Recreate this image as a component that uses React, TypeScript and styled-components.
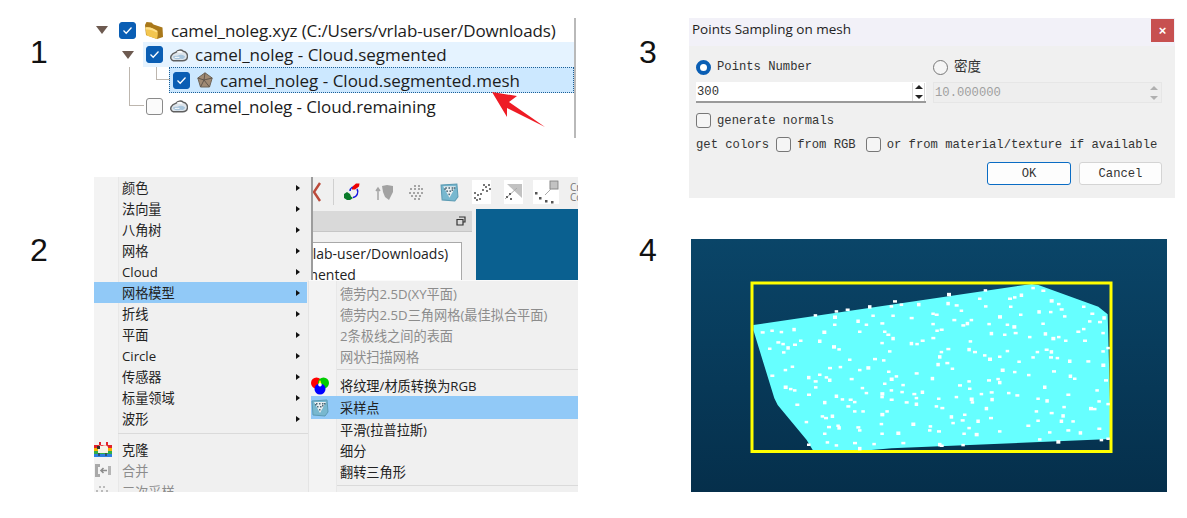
import React from "react";
import styled, { createGlobalStyle } from "styled-components";

const GlobalStyle = createGlobalStyle`
  html, body { margin: 0; padding: 0; background: #fff; }
  body { width: 1187px; height: 518px; overflow: hidden; font-family: "Open Sans", "Noto Sans CJK SC", sans-serif; }
`;

const Page = styled.div`
  display: flex;
  width: 1187px;
  height: 518px;
`;

const Column = styled.div<{ $w: number; $gap: number }>`
  width: ${(p) => p.$w}px;
  display: flex;
  flex-direction: column;
  gap: ${(p) => p.$gap}px;
  padding-top: 18px;
  box-sizing: border-box;
`;

const Figure = styled.section<{ $pad: number }>`
  display: flex;
  padding-left: ${(p) => p.$pad}px;
`;

const Num = styled.div<{ $top: number; $w: number }>`
  width: ${(p) => p.$w}px;
  flex: none;
  margin-top: ${(p) => p.$top}px;
  font: 32px/36px "Liberation Sans", sans-serif;
  color: #111;
`;

/* ---- 1: tree ---- */
const Tree = styled.div`
  position: relative;
  width: 481px;
  height: 120px;
  border-right: 2px solid #b9b9b9;
  font-size: 17px;
  color: #1c1c1c;
`;

const Row = styled.div<{ $indent: number; $h: number }>`
  display: flex;
  height: ${(p) => p.$h}px;
  margin-left: ${(p) => p.$indent}px;
`;

const ArrowSlot = styled.div<{ $w: number }>`
  width: ${(p) => p.$w}px;
  flex: none;
  display: flex;
  align-items: center;
`;

const Arrow = styled.span`
  width: 0;
  height: 0;
  border-left: 6px solid transparent;
  border-right: 6px solid transparent;
  border-top: 8px solid #6d5a50;
`;

const RowBody = styled.div<{ $pad: number; $state?: "hover" | "current" }>`
  position: relative;
  flex: 1;
  display: flex;
  align-items: center;
  gap: 7px;
  padding-left: ${(p) => p.$pad}px;
  box-sizing: border-box;
  background: ${(p) => (p.$state === "hover" ? "#e5f3ff" : p.$state === "current" ? "#cce8ff" : "transparent")};
  ${(p) => p.$state === "current" && "outline: 1px dotted #1c5f96; outline-offset: -1px;"}
`;

const TreeCheck = styled.span<{ $on?: boolean }>`
  width: 17px;
  height: 17px;
  flex: none;
  box-sizing: border-box;
  border-radius: 3px;
  display: flex;
  align-items: center;
  justify-content: center;
  background: ${(p) => (p.$on ? "#0a5eb4" : "#fbfbfb")};
  border: 1px solid ${(p) => (p.$on ? "#0a5eb4" : "#8a8a8a")};
`;

const IconSlot = styled.span<{ $w: number }>`
  width: ${(p) => p.$w}px;
  flex: none;
  display: flex;
  align-items: center;
  justify-content: center;
`;

const Name = styled.span<{ $ls: number }>`
  white-space: nowrap;
  letter-spacing: ${(p) => p.$ls}px;
`;

const Connector = styled.span<{ $left: number; $top: number; $w: number; $h: number }>`
  position: absolute;
  left: ${(p) => p.$left}px;
  top: ${(p) => p.$top}px;
  width: ${(p) => p.$w}px;
  height: ${(p) => p.$h}px;
  border-left: 1px solid #bdb6ae;
  border-bottom: 1px solid #bdb6ae;
`;

const PointerArrow = styled.svg`
  position: absolute;
  left: 398px;
  top: 73px;
`;

const Tick = () => (
  <svg width="11" height="9" viewBox="0 0 11 9">
    <path d="M1.5 4.5 4.2 7.2 9.5 1.5" fill="none" stroke="#fff" strokeWidth="1.3" />
  </svg>
);

const CloudIcon = () => (
  <svg width="19" height="14" viewBox="0 0 19 14">
    <path d="M3.500 13C1 12.500 0 9.500 1.500 7.500 2.500 5 5 4.500 6.500 4 8 1.500 12 1 14 3c3 .5 5 3.500 4.300 6.500-.5 2.500-2.500 3.500-5 3.500z" fill="#dfe6ec" stroke="#5f5f5f" strokeWidth="1.500" />
    <path d="M7 3.500c2-1 5-1 6.500.5-2 1-4.500.5-6.500-.5z" fill="#fff" />
    <path d="M3 9c2-2 3.500-.5 5.500-1.500S12.500 6.500 16 8.500c-1 2.500-3 3-5 2.500-2.500 1-5.500 1-8-2z" fill="#a9c6dd" />
    <path d="M5 9.500c2-.5 3 .5 5 0" fill="none" stroke="#fff" strokeWidth="1" />
  </svg>
);

const FolderIcon = () => (
  <svg width="20" height="19" viewBox="0 0 20 19">
    <path d="M1 4 2.500 1 7.500 1.500 9.500 3.500 18.500 6.500 19 16 13 18 2 14z" fill="#a9781a" />
    <path d="M1.500 6.500C5 5.500 9 7 13.500 10c.5 2.500.3 5 -.5 8L2.500 14.500z" fill="#f3c650" />
    <path d="M1.500 6.500C5 5.500 9 7 13.500 10l-1 1.500C9 9 5 8 1.500 8.500z" fill="#ffe08a" />
  </svg>
);

const MeshIcon = () => (
  <svg width="16" height="16" viewBox="0 0 16 16">
    <path d="M8 .8 15.200 6 12.500 15H3.500L.8 6z" fill="#a08a74" stroke="#6d6458" strokeWidth="1" />
    <path d="M8 .8 7 8M.8 6 7 8M15.200 6 7 8M3.500 15 7 8M12.500 15 7 8" stroke="#5b5148" strokeWidth=".9" fill="none" />
  </svg>
);

/* ---- 2: context menu ---- */
const AppShot = styled.div`
  position: relative;
  width: 484px;
  height: 315px;
  overflow: hidden;
  background: #f0f0f0;
  display: flex;
  flex-direction: column;
`;

const Toolbar = styled.div`
  height: 32px;
  flex: none;
  padding: 0 0 2px 219px;
  display: flex;
  align-items: center;
  box-sizing: border-box;
`;

const ToolIcon = styled.span<{ $w: number; $ml: number; $bg?: string }>`
  width: ${(p) => p.$w}px;
  height: 24px;
  flex: none;
  margin-left: ${(p) => p.$ml}px;
  display: flex;
  align-items: center;
  justify-content: center;
  background: ${(p) => p.$bg || "transparent"};
`;

const ToolDivider = styled.span`
  width: 1px;
  height: 26px;
  flex: none;
  margin-left: 12px;
  background: #d0d0d0;
`;

const ToolText = styled.span`
  margin-left: 11px;
  width: 8px;
  overflow: hidden;
  font-size: 10px;
  line-height: 10px;
  color: #777;
`;

const Workspace = styled.div`
  flex: 1;
  display: flex;
  padding-left: 219px;
`;

const DockPane = styled.div`
  width: 159px;
  flex: none;
  margin-top: 2px;
`;

const DockHeader = styled.div`
  height: 20px;
  background: #d9d9d9;
  border-bottom: 1px solid #c6c6c6;
  display: flex;
  align-items: center;
  justify-content: flex-end;
  padding-right: 6px;
  color: #333;
`;

const DockTree = styled.div`
  width: 149px;
  height: 60px;
  margin-top: 10px;
  background: #fff;
  border: 1px solid #a9a9a9;
  border-left: none;
  box-sizing: border-box;
  font-size: 14px;
  line-height: 21px;
  color: #222;
  white-space: nowrap;
  overflow: hidden;
`;

const DockLine = styled.div<{ $left: number }>`
  margin-left: ${(p) => p.$left}px;
`;

const View3D = styled.div`
  width: 102px;
  height: 71px;
  flex: none;
  margin-left: 4px;
  background: #0a6090;
`;

const MenuPanel = styled.div`
  position: absolute;
  left: 0;
  top: 0;
  width: 219px;
  height: 315px;
  background: linear-gradient(to right, #f3f3f3 24px, #e8e8e8 24px 25px, #f0f0f0 25px);
  border-right: 2px solid #9c9c9c;
  box-sizing: border-box;
  font-size: 13.200px;
`;

const SubPanel = styled.div`
  position: absolute;
  left: 214px;
  top: 103px;
  right: 0;
  bottom: 0;
  padding: 2px 0 0 2px;
  box-sizing: border-box;
  border-top: 1px solid #fafafa;
  border-left: 1px solid #e4e4e4;
  background: linear-gradient(to right, #f3f3f3 27px, #e8e8e8 27px 28px, #f0f0f0 28px);
  font-size: 13.200px;
`;

const Item = styled.div<{ $active?: boolean; $off?: boolean; $tall?: boolean; $clip?: boolean }>`
  position: relative;
  height: ${(p) => (p.$tall ? 23 : 21)}px;
  display: flex;
  align-items: center;
  color: ${(p) => (p.$off ? "#8c8c8c" : "#222")};
  background: ${(p) => (p.$active ? "#91c9f7" : "transparent")};
  white-space: nowrap;
  width: ${(p) => (p.$clip ? "213px" : "auto")};
`;

const ItemIcon = styled.span<{ $w: number }>`
  width: ${(p) => p.$w}px;
  flex: none;
  display: flex;
  align-items: center;
`;

const SubArrow = styled.span`
  position: absolute;
  right: 7px;
  width: 0;
  height: 0;
  border-top: 3.500px solid transparent;
  border-bottom: 3.500px solid transparent;
  border-left: 4px solid #111;
`;

const MenuSep = styled.div<{ $from: number; $top: number; $bottom: number }>`
  height: 1px;
  margin: ${(p) => p.$top}px 0 ${(p) => p.$bottom}px ${(p) => p.$from}px;
  background: #dadada;
`;

const SamplingIcon = ({ size = 18 }: { size?: number }) => (
  <svg width={size} height={size} viewBox="0 0 18 18">
    <path d="M1 2 16 1l1 12-3 4-12-1z" fill="#78b8cf" stroke="#5d9cb4" />
    <path d="M3 3h12L9 14z" fill="#e9eef0" />
    {[[5, 4], [8, 4], [11, 4], [13, 4], [6, 7], [9, 7], [11, 6], [8, 10], [4, 5]].map(([x, y]) => (
      <rect key={`${x}-${y}`} x={x} y={y} width="1.500" height="1.500" fill="#4c6a78" />
    ))}
  </svg>
);

const RgbIcon = () => (
  <svg width="18" height="18" viewBox="0 0 18 18">
    <circle cx="5.500" cy="6" r="5.500" fill="#f00" />
    <circle cx="12.500" cy="6" r="5.500" fill="#0c0" />
    <circle cx="9" cy="12" r="5.500" fill="#00f" />
    <path d="M9 3a5.500 5.500 0 0 1 0 6.500A5.500 5.500 0 0 1 9 3z" fill="#ff0" />
    <circle cx="9" cy="7.800" r="1.800" fill="#fff" />
  </svg>
);

const RainbowIcon = () => (
  <svg width="18" height="15" viewBox="0 0 18 15">
    <path d="M0 3h18v3H0z" fill="#e2232b" />
    <path d="M0 6h18v3H0z" fill="#f6b400" />
    <path d="M0 9h18v3H0z" fill="#2fae4a" />
    <path d="M0 12h18v3H0z" fill="#2f7fe0" />
    <path d="M5 0h2v3H5zM12 0h2v3h-2z" fill="#e2232b" />
    <path d="M4 5c1-2 3-1.500 4-1 2-1 5-1 6 1v6H4z" fill="#f7f4e8" />
    <path d="M5 11v3M12 11v3" stroke="#333" strokeWidth="1.200" />
    <rect x="3" y="4" width="3" height="3" fill="#333" />
  </svg>
);

const MergeIcon = () => (
  <svg width="18" height="15" viewBox="0 0 18 15">
    <path d="M1 1h5v3H4v7h2v3H1z" fill="#a9a9a9" />
    <path d="M14 3h3v9h-3z" fill="#b5b5b5" />
    <path d="M13 7.500H7M9.500 5 7 7.500 9.500 10" stroke="#8c8c8c" strokeWidth="1.600" fill="none" />
  </svg>
);

const DotCluster = ({ w, h, pts, fill = "#555" }: { w: number; h: number; pts: number[][]; fill?: string }) => (
  <svg width={w} height={h} viewBox={`0 0 ${w} ${h}`}>
    {pts.map(([x, y]) => (
      <rect key={`${x}-${y}`} x={x} y={y} width="2" height="2" fill={fill} />
    ))}
  </svg>
);

const scatter = [[2, 14], [5, 11], [2, 9], [7, 15], [10, 6], [13, 3], [11, 1], [14, 7], [16, 1], [8, 10], [17, 5], [4, 16]];

const mainItems = ["颜色", "法向量", "八角树", "网格", "Cloud", "网格模型", "折线", "平面", "Circle", "传感器", "标量领域", "波形"];

/* ---- 3: dialog ---- */
const Dialog = styled.div`
  width: 486px;
  height: 180px;
  background: #f0f0f0;
  display: flex;
  flex-direction: column;
  font: 12.200px "Liberation Mono", "Noto Sans CJK SC", monospace;
  color: #333;
`;

const TitleBar = styled.div`
  height: 28px;
  flex: none;
  display: flex;
  justify-content: space-between;
  padding: 1px 1px 0 3px;
  box-sizing: border-box;
  background: #f2f1f8;
  font: 13.500px/21px "Open Sans", sans-serif;
  color: #222;
`;

const CloseBtn = styled.span`
  width: 23px;
  height: 23px;
  background: #c75050;
  color: #fff;
  display: flex;
  align-items: center;
  justify-content: center;
  font: bold 13px "Liberation Sans", sans-serif;
`;

const DialogBody = styled.div`
  flex: 1;
  padding: 0 13px 0 7px;
  display: flex;
  flex-direction: column;
`;

const TwoCols = styled.div<{ $h: number; $top?: number }>`
  height: ${(p) => p.$h}px;
  flex: none;
  padding-top: ${(p) => p.$top || 0}px;
  box-sizing: border-box;
  display: grid;
  grid-template-columns: 230px 229px;
  column-gap: 7px;
  align-items: center;
`;

const Line = styled.div<{ $h: number }>`
  height: ${(p) => p.$h}px;
  flex: none;
  display: flex;
  align-items: center;
  white-space: nowrap;
`;

const RadioLabel = styled.span`
  display: flex;
  align-items: center;
  gap: 6px;
`;

const CjkLabel = styled.span`
  font-size: 13.500px;
  line-height: 15px;
`;

const Radio = styled.span<{ $on?: boolean }>`
  width: 15px;
  height: 15px;
  box-sizing: border-box;
  border-radius: 50%;
  flex: none;
  background: ${(p) => (p.$on ? "#fff" : "#f5f5f5")};
  border: ${(p) => (p.$on ? "4px solid #0a5eb4" : "1px solid #777")};
`;

const Spin = styled.div<{ $off?: boolean }>`
  height: 21px;
  display: flex;
  align-items: center;
  justify-content: space-between;
  padding: 1px 1px 0;
  box-sizing: border-box;
  background: ${(p) => (p.$off ? "#eeeeee" : "#fff")};
  border: ${(p) => (p.$off ? "1px solid #e6e6e6" : "none")};
  border-bottom: ${(p) => (p.$off ? "1px solid #e6e6e6" : "2px solid #9a9a9a")};
  color: ${(p) => (p.$off ? "#a0a0a0" : "#333")};
`;

const SpinBtns = styled.span<{ $off?: boolean }>`
  width: 13px;
  height: 18px;
  display: flex;
  flex-direction: column;
  align-items: center;
  justify-content: space-between;
  padding: 2px 0;
  box-sizing: border-box;
  ${(p) => !p.$off && "border-left: 1px solid #d8d8d8; border-right: 1px solid #d8d8d8;"}
  &::before, &::after {
    content: "";
    width: 0;
    height: 0;
    border-left: 4px solid transparent;
    border-right: 4px solid transparent;
  }
  &::before { border-bottom: 4px solid ${(p) => (p.$off ? "#b0b0b0" : "#222")}; }
  &::after { border-top: 4px solid ${(p) => (p.$off ? "#b0b0b0" : "#222")}; }
`;

const Box = styled.span<{ $ml?: number; $mr?: number }>`
  width: 15px;
  height: 15px;
  flex: none;
  box-sizing: border-box;
  border: 1px solid #777;
  border-radius: 3px;
  background: #f5f5f5;
  margin-left: ${(p) => p.$ml || 0}px;
  margin-right: ${(p) => p.$mr || 6}px;
`;

const Actions = styled.div`
  display: flex;
  justify-content: flex-end;
  gap: 8px;
  margin-top: 11px;
`;

const Btn = styled.button<{ $primary?: boolean }>`
  width: ${(p) => (p.$primary ? 84 : 83)}px;
  height: 23px;
  padding: 0;
  background: #fdfdfd;
  border: 1px solid ${(p) => (p.$primary ? "#0a6cc4" : "#d4d4d4")};
  border-radius: 3px;
  font: inherit;
  color: inherit;
`;

/* ---- 4: render ---- */
const RenderView = styled.div`
  width: 476px;
  height: 253px;
  margin-left: 2px;
  background: linear-gradient(#0a4568, #052f4b);
`;

const RenderSvg = styled.svg`
  display: block;
`;

// positions read from the 3x crop, converted by z/3 when drawn
const dots: number[][] = [
  [792,178],[902,167],[1045,160],[1075,168],[1010,180],[990,188],[975,192],[885,192],[790,205],[815,212],[903,215],[978,216],[1100,197],[1122,208],[1197,216],[1130,224],[1063,230],[1098,232],[1222,237],[1140,245],[1258,248],[1245,262],[1215,260],[1008,240],[945,245],[830,228],[745,237],[755,240],[702,208],[650,210],[630,200],[620,215],[555,215],[488,225],[455,230],[392,242],[450,246],[565,243],[625,243],[680,250],[520,258],[545,270],[592,266],[450,270],[328,283],[233,293],[262,288],[290,292],[418,291],[525,291],[600,291],[610,300],[625,310],[745,268],[808,256],[860,256],[848,265],[835,272],[913,268],[968,270],[988,275],[1075,267],[757,288],[770,285],[920,295],[960,300],[992,295],[1035,307],[1082,296],[1180,291],[1197,283],[1255,295],[1105,310],[1122,307],[1143,318],[1200,318],[405,318],[348,318],[280,323],[295,328],[310,338],[330,330],[255,342],[297,353],[447,335],[463,344],[592,325],[745,310],[680,325],[697,328],[713,318],[857,320],[853,343],[870,352],[968,349],[900,362],[915,372],[945,366],[1058,352],[1085,345],[1100,350],[1045,368],[1098,368],[1118,370],[1155,378],[1210,380],[1255,350],[1270,340],[1255,390],[615,350],[770,352],[790,343],[765,365],[495,375],[570,373],[597,377],[760,388],[787,385],[803,402],[1003,381],[953,405],[990,412],[1032,421],[1107,410],[1157,423],[1170,432],[1263,437],[1237,467],[1080,456],[435,400],[467,397],[525,406],[550,398],[302,406],[323,396],[262,423],[372,427],[405,420],[392,440],[425,428],[435,435],[500,433],[612,411],[635,425],[620,432],[600,447],[655,451],[695,416],[743,430],[853,440],[912,437],[940,433],[945,442],[825,452],[855,462],[393,458],[302,456],[318,463],[330,467],[372,480],[455,483],[473,494],[497,495],[510,502],[420,502],[337,510],[533,460],[545,475],[592,476],[620,467],[652,472],[688,478],[713,471],[592,487],[620,495],[695,490],[695,507],[665,503],[762,492],[815,487],[860,492],[863,503],[890,478],[920,473],[922,493],[972,475],[997,482],[1060,492],[1087,497],[1150,480],[1243,500],[1270,508],[1218,520],[1230,523],[755,515],[772,520],[905,520],[1055,530],[1100,535],[1138,517],[1135,542],[490,515],[510,530],[535,530],[592,538],[607,530],[413,545],[423,550],[443,543],[365,562],[432,577],[460,573],[463,578],[520,578],[525,587],[590,568],[685,567],[737,575],[735,587],[762,590],[800,545],[840,540],[833,557],[805,565],[880,558],[918,550],[853,580],[838,597],[875,598],[945,590],[1060,558],[1030,573],[1130,558],[1165,560],[1150,587],[1095,593],[1187,593],[1243,582],[420,597],[592,597],[640,594],[428,623],[455,632],[510,625],[525,640],[568,628],[655,625],[372,630],[765,628],[770,633],[835,631],[1065,614],[1120,620],[1250,616],[1270,612],
];

const outline = [[205,270],[1040,147],[1060,150],[1240,215],[1268,238],[1278,612],[620,640],[525,648],[385,648],[365,615],[278,510],[268,490],[205,285]];
const toView = ([x, y]: number[]) => [x / 3 - 6, y / 3 - 4];

const TreePanel = () => (
  <Tree>
    <Row $indent={3} $h={24}>
      <ArrowSlot $w={23}><Arrow /></ArrowSlot>
      <RowBody $pad={0}>
        <TreeCheck $on><Tick /></TreeCheck>
        <IconSlot $w={21}><FolderIcon /></IconSlot>
        <Name $ls={-0.12}>camel_noleg.xyz (C:/Users/vrlab-user/Downloads)</Name>
      </RowBody>
    </Row>
    <Row $indent={29} $h={25}>
      <ArrowSlot $w={21}><Arrow /></ArrowSlot>
      <RowBody $pad={3} $state="hover">
        <TreeCheck $on><Tick /></TreeCheck>
        <IconSlot $w={18}><CloudIcon /></IconSlot>
        <Name $ls={0}>camel_noleg - Cloud.segmented</Name>
      </RowBody>
    </Row>
    <Row $indent={76} $h={26}>
      <RowBody $pad={4} $state="current">
        <TreeCheck $on><Tick /></TreeCheck>
        <IconSlot $w={16}><MeshIcon /></IconSlot>
        <Name $ls={0}>camel_noleg - Cloud.segmented.mesh</Name>
      </RowBody>
    </Row>
    <Row $indent={50} $h={26}>
      <RowBody $pad={3}>
        <TreeCheck />
        <IconSlot $w={18}><CloudIcon /></IconSlot>
        <Name $ls={-0.1}>camel_noleg - Cloud.remaining</Name>
      </RowBody>
    </Row>
    <Connector $left={63} $top={49} $w={13} $h={12} />
    <Connector $left={36} $top={49} $w={14} $h={38} />
    <PointerArrow width="55" height="38" viewBox="0 0 55 38">
      <path d="M1 1 26 5l-8 6 36 25L16 17l0 9z" fill="#ee1c25" />
    </PointerArrow>
  </Tree>
);

const MenuPanelShot = () => (
  <AppShot>
    <Toolbar>
      <ToolIcon $w={8} $ml={0}>
        <svg width="8" height="20" viewBox="0 0 8 20"><path d="M7 1 1 10l6 9" fill="none" stroke="#bb4a3a" strokeWidth="2.400" /></svg>
      </ToolIcon>
      <ToolDivider />
      <ToolIcon $w={17} $ml={9}>
        <svg width="17" height="18" viewBox="0 0 17 18">
          <path d="M9 4l4-3.500h3.500l-.5 3-4 3H9z" fill="#e00" />
          <path d="M1 11l3-2 3 2 1 2.500 2 1.500-3 2H4L1 15z" fill="#0a7a2a" />
          <path d="M14 6c2 3 0 8-4 8.500M7 8c0-2 1-3 2.500-4" fill="none" stroke="#1414e0" strokeWidth="1.500" />
        </svg>
      </ToolIcon>
      <ToolIcon $w={19} $ml={15}>
        <svg width="19" height="17" viewBox="0 0 19 17">
          <path d="M3 16V5M1 7l2-3 2 3" fill="none" stroke="#a5a5a5" strokeWidth="1.500" />
          <path d="M7 2l5-1 6 1v6l-4 8-4-3-2-5z" fill="#a2a2a2" />
        </svg>
      </ToolIcon>
      <ToolIcon $w={16} $ml={14}>
        <DotCluster w={16} h={16} fill="#a5a5a5" pts={[[6, 1], [10, 1], [2, 4], [6, 4], [10, 4], [13, 4], [1, 8], [5, 8], [9, 8], [13, 8], [3, 11], [7, 11], [11, 11], [6, 14], [10, 14]]} />
      </ToolIcon>
      <ToolIcon $w={19} $ml={16}><SamplingIcon size={19} /></ToolIcon>
      <ToolIcon $w={19} $ml={13} $bg="#fff"><DotCluster w={19} h={18} pts={scatter} fill="#777" /></ToolIcon>
      <ToolIcon $w={19} $ml={13} $bg="#fff">
        <svg width="19" height="18" viewBox="0 0 19 18">
          <path d="M3 1h15v14z" fill="#c2c2c2" />
          <path d="M1 16 13 5" stroke="#aaa" />
          <rect x="2" y="13" width="2" height="2" fill="#666" /><rect x="6" y="15" width="2" height="2" fill="#666" /><rect x="5" y="10" width="2" height="2" fill="#666" />
        </svg>
      </ToolIcon>
      <ToolIcon $w={26} $ml={10} $bg="#fff">
        <svg width="26" height="24" viewBox="0 0 26 24">
          <rect x="17" y="1" width="8" height="8" fill="#c2c2c2" stroke="#888" />
          <path d="M12 15 19 8" stroke="#aaa" />
          <rect x="2" y="12" width="2.500" height="2.500" fill="#555" /><rect x="6" y="17" width="2.500" height="2.500" fill="#555" /><rect x="12" y="20" width="2.500" height="2.500" fill="#555" /><rect x="18" y="21" width="2.500" height="2.500" fill="#555" />
        </svg>
      </ToolIcon>
      <ToolText>Cr Cc</ToolText>
    </Toolbar>
    <Workspace>
      <DockPane>
        <DockHeader>
          <svg width="10" height="10" viewBox="0 0 10 10">
            <path d="M3 1h6v5H7M1 3.500h6v5.500H1z" fill="none" stroke="#333" strokeWidth="1.200" />
          </svg>
        </DockHeader>
        <DockTree>
          <DockLine $left={-6}>rlab-user/Downloads)</DockLine>
          <DockLine $left={-8}>mented</DockLine>
        </DockTree>
      </DockPane>
      <View3D />
    </Workspace>
    <MenuPanel>
      {mainItems.map((label, i) => (
        <Item key={label} $clip $active={i === 5}>
          <ItemIcon $w={28} />
          {label}
          <SubArrow />
        </Item>
      ))}
      <MenuSep $from={24} $top={4} $bottom={5} />
      <Item $clip><ItemIcon $w={28}><RainbowIcon /></ItemIcon>克隆</Item>
      <Item $clip $off><ItemIcon $w={28}><MergeIcon /></ItemIcon>合并</Item>
      <Item $clip $off>
        <ItemIcon $w={28}><DotCluster w={16} h={14} fill="#bbb" pts={[[5, 1], [9, 1], [2, 5], [7, 5], [12, 5], [4, 9], [10, 9]]} /></ItemIcon>
        三次采样
      </Item>
    </MenuPanel>
    <SubPanel>
      {["德劳内2.5D(XY平面)", "德劳内2.5D三角网格(最佳拟合平面)", "2条极线之间的表面", "网状扫描网格"].map((t) => (
        <Item key={t} $off><ItemIcon $w={29} />{t}</Item>
      ))}
      <MenuSep $from={26} $top={2} $bottom={5} />
      <Item><ItemIcon $w={29}><RgbIcon /></ItemIcon>将纹理/材质转换为RGB</Item>
      <Item $tall $active><ItemIcon $w={29}><SamplingIcon /></ItemIcon>采样点</Item>
      <Item><ItemIcon $w={29} />平滑(拉普拉斯)</Item>
      <Item><ItemIcon $w={29} />细分</Item>
      <Item><ItemIcon $w={29} />翻转三角形</Item>
      <MenuSep $from={26} $top={3} $bottom={0} />
    </SubPanel>
  </AppShot>
);

const SamplingDialog = () => (
  <Dialog>
    <TitleBar>
      Points Sampling on mesh
      <CloseBtn>×</CloseBtn>
    </TitleBar>
    <DialogBody>
      <TwoCols $h={36} $top={6}>
        <RadioLabel><Radio $on />Points Number</RadioLabel>
        <RadioLabel><Radio /><CjkLabel>密度</CjkLabel></RadioLabel>
      </TwoCols>
      <TwoCols $h={21}>
        <Spin>300<SpinBtns /></Spin>
        <Spin $off>10.000000<SpinBtns $off /></Spin>
      </TwoCols>
      <Line $h={35}><Box />generate normals</Line>
      <Line $h={13}>
        get colors<Box $ml={7} />from RGB<Box $ml={10} />or from material/texture if available
      </Line>
      <Actions>
        <Btn $primary>OK</Btn>
        <Btn>Cancel</Btn>
      </Actions>
    </DialogBody>
  </Dialog>
);

const MeshRender = () => (
  <RenderView>
    <RenderSvg width="476" height="253" viewBox="0 0 476 253">
      <polygon points={outline.map((p) => toView(p).join(",")).join(" ")} fill="#66ffff" />
      <rect x="61" y="44" width="359" height="168.500" fill="none" stroke="#ffff00" strokeWidth="3" />
      {dots.map((d, i) => {
        const [x, y] = toView(d);
        return <rect key={i} x={x - 2} y={y - 1.5} width={i % 3 === 0 ? 4 : 3.5} height={i % 4 === 0 ? 3.5 : 2.5} fill="#fff" />;
      })}
    </RenderSvg>
  </RenderView>
);

export default function App() {
  return (
    <Page>
      <GlobalStyle />
      <Column $w={600} $gap={39}>
        <Figure $pad={30}>
          <Num $top={16} $w={63}>1</Num>
          <TreePanel />
        </Figure>
        <Figure $pad={30}>
          <Num $top={55} $w={64}>2</Num>
          <MenuPanelShot />
        </Figure>
      </Column>
      <Column $w={587} $gap={41}>
        <Figure $pad={39}>
          <Num $top={16} $w={50}>3</Num>
          <SamplingDialog />
        </Figure>
        <Figure $pad={39}>
          <Num $top={-7} $w={50}>4</Num>
          <MeshRender />
        </Figure>
      </Column>
    </Page>
  );
}
